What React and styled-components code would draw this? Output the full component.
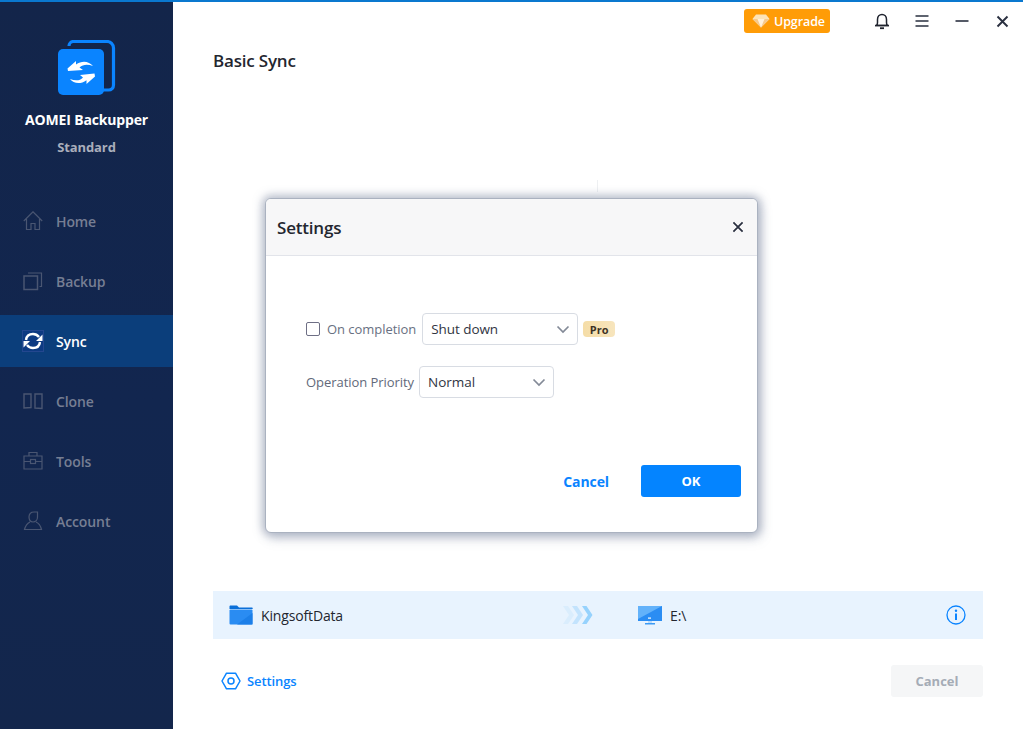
import React from 'react';
import styled, { createGlobalStyle } from 'styled-components';

const Global = createGlobalStyle`
  html, body { margin: 0; padding: 0; background: #fff; }
  body { font-family: "Open Sans", "Noto Sans", "Liberation Sans", sans-serif; overflow: hidden; }
  * { box-sizing: border-box; }
`;

const Win = styled.div`
  position: relative; width: 1023px; height: 729px; display: flex; overflow: hidden;
  background: #fff; border-top: 2px solid #0a78cf;
`;
const Side = styled.aside`
  width: 173px; flex: none; display: flex; flex-direction: column; align-items: stretch;
  background: linear-gradient(180deg, #13254a 0%, #12264f 55%, #13264c 100%);
`;
const Brand = styled.div`
  display: flex; flex-direction: column; align-items: center; padding-top: 38px; height: 193px;
`;
const BrandName = styled.div`
  margin-top: 12px; color: #fff; font-size: 14px; font-weight: 700; line-height: 20px; letter-spacing: -0.15px;
`;
const BrandEdition = styled.div`
  margin-top: 7px; color: #a9aebb; font-size: 13px; font-weight: 700; line-height: 20px; letter-spacing: -0.1px;
`;
const Nav = styled.nav`
  display: flex; flex-direction: column; padding-top: 0;
`;
const NavItem = styled.div`
  height: 52px; margin-bottom: 8px; display: flex; align-items: center; padding-left: 23px; gap: 13px;
  font-size: 14px; font-weight: 600; letter-spacing: -0.1px;
  color: ${p => (p.$active ? '#fff' : '#767e93')};
  background: ${p => (p.$active ? '#0b3e7b' : 'transparent')};
`;
const Ico = styled.svg`
  width: 20px; height: 20px; flex: none; display: block;
`;
const Main = styled.main`
  flex: 1; display: flex; flex-direction: column; min-width: 0; padding: 0 40px;
`;
const TopBar = styled.div`
  height: 38px; margin: 0 -40px; padding: 7px 12px 0 0; display: flex; justify-content: flex-end; align-items: flex-start;
`;
const Upgrade = styled.div`
  width: 86px; height: 24px; border-radius: 3px; background: #ff9c07; color: #fff; display: flex; align-items: center;
  padding-left: 8px; gap: 4px; font-size: 12.5px; font-weight: 600; letter-spacing: -0.1px; margin-right: 21px;
`;
const WinBtn = styled.div`
  width: 18px; height: 18px; margin: 3px 0 0 22px; display: flex; align-items: center; justify-content: center;
  &:first-of-type { margin-left: 0; }
`;
const Title = styled.h1`
  margin: 9px 0 0; font-size: 17px; line-height: 24px; font-weight: 600; color: #23262f; letter-spacing: -0.2px;
`;
const Spacer = styled.div` flex: 1; `;
const TaskBar = styled.div`
  height: 48px; background: #e8f3fe; display: flex; align-items: center; padding: 0 17px 0 16px;
`;
const TaskName = styled.span`
  font-size: 14px; color: #23262f; font-weight: 400; letter-spacing: -0.15px; margin-left: 8px;
`;
const FolderPart = styled.div` display: flex; align-items: center; width: 334px; `;
const Arrows = styled.div` width: 75px; display: flex; align-items: center; `;
const DestPart = styled.div` flex: 1; display: flex; align-items: center; `;
const Footer = styled.div`
  height: 90px; display: flex; justify-content: space-between; align-items: flex-start; padding-top: 26px;
`;
const SettingsLink = styled.div`
  display: flex; align-items: center; gap: 6px; margin-left: 8px; height: 32px; color: #0a84ff; font-size: 13px; font-weight: 600; letter-spacing: -0.1px;
`;
const CancelBtn = styled.div`
  width: 92px; height: 32px; border-radius: 3px; background: #f5f6f7; color: #a5acb6; font-size: 13px; font-weight: 700;
  display: flex; align-items: center; justify-content: center;
`;
const TickMark = styled.div`
  position: absolute; left: 597px; top: 178px; width: 1px; height: 12px; background: #eef0f2;
`;
const Dialog = styled.div`
  position: absolute; left: 265px; top: 196px; width: 493px; height: 335px; background: #fff; border-radius: 6px;
  border: 1px solid #aab2c0;
  box-shadow: 0 0 8px 3px rgba(120, 132, 158, .5), 3px 6px 12px rgba(120, 132, 158, .25);
  display: flex; flex-direction: column; overflow: hidden;
`;
const DialogHead = styled.div`
  height: 57px; flex: none; background: #f7f7f8; border-bottom: 1px solid #e2e4ea; display: flex; align-items: center;
  justify-content: space-between; padding: 0 13px 0 11px;
`;
const DialogTitle = styled.div`
  font-size: 17px; font-weight: 600; color: #23262f; letter-spacing: -0.2px;
`;
const DialogBody = styled.div`
  flex: 1; display: flex; flex-direction: column; padding: 57px 0 0 40px;
`;
const Row = styled.div`
  display: flex; align-items: center; height: 32px; margin-bottom: 21px;
`;
const Check = styled.span`
  width: 14px; height: 14px; border: 1.5px solid #6e6f85; border-radius: 2px; margin-right: 7px; flex: none;
`;
const Label = styled.span`
  font-size: 13px; color: ${p => p.$dark ? '#62697a' : '#687082'}; letter-spacing: -0.05px; margin-right: ${p => p.$gap}px; white-space: nowrap;
`;
const Select = styled.div`
  width: ${p => p.$w}px; height: 32px; border: 1px solid #d8dce3; border-radius: 4px; background: #fff; display: flex;
  align-items: center; justify-content: space-between; padding: 0 7px 0 8px; font-size: 13.5px; color: #30343f; letter-spacing: -0.05px;
`;
const Pro = styled.span`
  margin-left: 5px; width: 32px; height: 16px; border-radius: 4px; background: linear-gradient(90deg, #f5dda7, #f7e5bd);
  color: #3d3326; font-size: 11px; font-weight: 700; display: flex; align-items: center; justify-content: center;
`;
const DialogFoot = styled.div`
  flex: none; height: 67px; display: flex; justify-content: flex-end; align-items: flex-start; padding-right: 16px;
`;
const DialogCancel = styled.div`
  color: #0a84ff; font-size: 14px; font-weight: 700; height: 32px; display: flex; align-items: center; margin-right: 32px; letter-spacing: -0.1px;
`;
const OkBtn = styled.div`
  width: 100px; height: 32px; background: #0484ff; color: #fff; font-size: 13px; font-weight: 700; border-radius: 3px;
  display: flex; align-items: center; justify-content: center;
`;

const Stroke = { fill: 'none', stroke: 'currentColor', strokeWidth: 1.2 };
const dim = '#4a5672';

const Chevron = () => (
  <svg width="14" height="14" viewBox="0 0 14 14"><path d="M1.5 4.5 7 10l5.5-5.5" fill="none" stroke="#838a97" strokeWidth="1.7" /></svg>
);

const Logo = () => (
  <svg width="58" height="58" viewBox="0 0 58 58">
    <path d="M11 6c0-2.5 2-4.5 4.500-4.500H49c3.500 0 6.500 3 6.500 6.500v37c0 3-2 5-5 5H45" fill="none" stroke="#0a84ff" strokeWidth="3.200" />
    <rect x="0" y="9" width="46" height="46" rx="5" fill="#0a84ff" />
    <path d="M9.500 28.500 18 21v3.500c6-4.500 13-3.500 17 1.500-5-2-10-2-13.500 1.500L25 30l-15 1z" fill="#fff" />
    <path d="M37 36.500 28.500 44v-3.800c-6 4.500-13 3.500-16.500-1.200 5 2 10 2 13-1.500L22 35l14.500-1.500z" fill="#fff" />
  </svg>
);

const HomeI = () => (
  <Ico viewBox="0 0 20 20" style={{ color: dim }}>
    <path d="M.8 10 10 .8 19.200 10M3.500 8v10.500h4.500v-6h4v6h4.500V8" {...Stroke} />
  </Ico>
);
const BackupI = () => (
  <Ico viewBox="0 0 20 20" style={{ color: dim }}>
    <rect x="1" y="5" width="13.500" height="13.500" {...Stroke} strokeWidth="1.500" />
    <path d="M5 2h13.500v13.500h-2" {...Stroke} />
  </Ico>
);
const SyncI = () => (
  <Ico viewBox="0 0 20 20" style={{ background: '#0d3a82', outline: '1px solid #23478f' }}>
    <path d="M3 9c.5-4 3.500-6 7-6 2.500 0 4.500 1 6 3" fill="none" stroke="#fff" strokeWidth="2.400" />
    <path d="M17 11c-.5 4-3.500 6-7 6-2.500 0-4.500-1-6-3" fill="none" stroke="#fff" strokeWidth="2.400" />
    <path d="M19.500 3.500v6.500h-6.500z M.500 16.500V10h6.500z" fill="#fff" />
  </Ico>
);
const CloneI = () => (
  <Ico viewBox="0 0 20 20" style={{ color: dim }}>
    <path d="M1 3h7v13.500l-7 .5zM19 3h-7v14l7 .5z" {...Stroke} strokeWidth="1.400" />
  </Ico>
);
const ToolsI = () => (
  <Ico viewBox="0 0 20 20" style={{ color: dim }}>
    <path d="M1 5h18v13H1zM6 5V1.500h8V5M1 10.500h6.500M12.500 10.500H19" {...Stroke} />
    <rect x="7.500" y="8.500" width="5" height="4" {...Stroke} />
  </Ico>
);
const AccountI = () => (
  <Ico viewBox="0 0 20 20" style={{ color: dim }}>
    <path d="M6 6c0-3 1.800-5 5-5h3.500v5c0 3-2 5-4.500 5S6 9 6 6zM7 11c-2 1-4.500 3.500-5.500 7.500h17c-1-4-3-6.500-5.500-7.500" {...Stroke} />
  </Ico>
);

const Diamond = () => (
  <svg width="18" height="14" viewBox="0 0 18 14">
    <path d="M4 .5h10l3.500 4.500L9 13.500.5 5z" fill="#fde3b8" />
    <path d="M.5 5h17L9 13.500z" fill="#f7c98b" />
    <path d="M5.500 5 9 13.500 12.500 5z" fill="#fff1da" />
  </svg>
);
const Bell = () => (
  <svg width="16" height="17" viewBox="0 0 16 17">
    <path d="M2.500 12.500c.7-.8 1-1.500 1-3V6.500C3.500 3.500 5.500 1.500 8 1.500s4.500 2 4.500 5v3c0 1.500.3 2.200 1 3z" fill="none" stroke="#20242f" strokeWidth="1.500" />
    <path d="M1 12.500h14" stroke="#20242f" strokeWidth="1.500" />
    <path d="M6 15.200h4" stroke="#20242f" strokeWidth="1.800" />
  </svg>
);
const Menu = () => (
  <svg width="14" height="14" viewBox="0 0 14 14"><path d="M.5 2h13M.5 7h13M.5 12h13" stroke="#2a3040" strokeWidth="1.500" /></svg>
);
const Minus = () => (
  <svg width="14" height="14" viewBox="0 0 14 14"><path d="M.5 7h13" stroke="#2a3040" strokeWidth="1.600" /></svg>
);
const CloseX = ({ size = 13 }) => (
  <svg width={size} height={size} viewBox="0 0 13 13"><path d="M1.500 1.500l10 10M11.500 1.500l-10 10" stroke="#2a3040" strokeWidth="1.900" /></svg>
);
const Folder = () => (
  <svg width="24" height="20" viewBox="0 0 24 20">
    <path d="M.500 1.500C.500.800 1 .500 1.500.500H8l2 2h13c.500 0 .700.300.700.800V4H.500z" fill="#0b6fd8" />
    <rect x=".5" y="4.500" width="23" height="15" rx="1" fill="#2a8cf2" />
    <path d="M8 19.500 23.500 8v11.500z" fill="#1c7fe8" />
  </svg>
);
const Monitor = () => (
  <svg width="24" height="20" viewBox="0 0 24 20">
    <rect x="0" y="1" width="24" height="15" fill="#2b8df3" />
    <path d="M0 1h24L0 14z" fill="#63b2fa" />
    <rect x="10" y="12.500" width="3" height="1.200" fill="#fff" />
    <path d="M10 16h4v2h-4z" fill="#bcdcfb" /><path d="M7 18h10v1.500H7z" fill="#3c9af4" />
  </svg>
);
const Chevrons = () => (
  <svg width="30" height="18" viewBox="0 0 30 18">
    <path d="M0 0h5l6 9-6 9H0l6-9z" fill="#daedfd" />
    <path d="M9 0h5l6 9-6 9H9l6-9z" fill="#c3e3fd" />
    <path d="M19 0h4.500l6 9-6 9H19l6-9z" fill="#96d2fd" />
  </svg>
);
const Info = () => (
  <svg width="20" height="20" viewBox="0 0 20 20">
    <circle cx="10" cy="10" r="9" fill="none" stroke="#0a84ff" strokeWidth="1.300" />
    <circle cx="10" cy="5.800" r="1.200" fill="#0a84ff" />
    <path d="M10 8.500v6.500" stroke="#0a84ff" strokeWidth="2" />
  </svg>
);
const Hex = () => (
  <svg width="20" height="18" viewBox="0 0 20 18">
    <path d="M5.500 1.200h9L19 9l-4.500 7.800h-9L1 9z" fill="none" stroke="#0a84ff" strokeWidth="1.500" strokeLinejoin="round" />
    <circle cx="10" cy="9" r="3" fill="none" stroke="#0a84ff" strokeWidth="1.500" />
  </svg>
);

const items = [
  ['Home', HomeI], ['Backup', BackupI], ['Sync', SyncI], ['Clone', CloneI], ['Tools', ToolsI], ['Account', AccountI],
];

export default function App() {
  return (
    <>
      <Global />
      <Win>
        <Side>
          <Brand>
            <Logo />
            <BrandName>AOMEI Backupper</BrandName>
            <BrandEdition>Standard</BrandEdition>
          </Brand>
          <Nav>
            {items.map(([name, I]) => (
              <NavItem key={name} $active={name === 'Sync'}><I />{name}</NavItem>
            ))}
          </Nav>
        </Side>
        <Main>
          <TopBar>
            <Upgrade><Diamond />Upgrade</Upgrade>
            <WinBtn><Bell /></WinBtn>
            <WinBtn><Menu /></WinBtn>
            <WinBtn><Minus /></WinBtn>
            <WinBtn><CloseX /></WinBtn>
          </TopBar>
          <Title>Basic Sync</Title>
          <Spacer />
          <TaskBar>
            <FolderPart><Folder /><TaskName>KingsoftData</TaskName></FolderPart>
            <Arrows><Chevrons /></Arrows>
            <DestPart><Monitor /><TaskName>E:\</TaskName></DestPart>
            <Info />
          </TaskBar>
          <Footer>
            <SettingsLink><Hex />Settings</SettingsLink>
            <CancelBtn>Cancel</CancelBtn>
          </Footer>
        </Main>
        <TickMark />
        <Dialog>
          <DialogHead>
            <DialogTitle>Settings</DialogTitle>
            <CloseX size={12} />
          </DialogHead>
          <DialogBody>
            <Row>
              <Check /><Label $gap={6}>On completion</Label>
              <Select $w={156}>Shut down<Chevron /></Select>
              <Pro>Pro</Pro>
            </Row>
            <Row>
              <Label $dark $gap={5}>Operation Priority</Label>
              <Select $w={135}>Normal<Chevron /></Select>
            </Row>
          </DialogBody>
          <DialogFoot>
            <DialogCancel>Cancel</DialogCancel>
            <OkBtn>OK</OkBtn>
          </DialogFoot>
        </Dialog>
      </Win>
    </>
  );
}
